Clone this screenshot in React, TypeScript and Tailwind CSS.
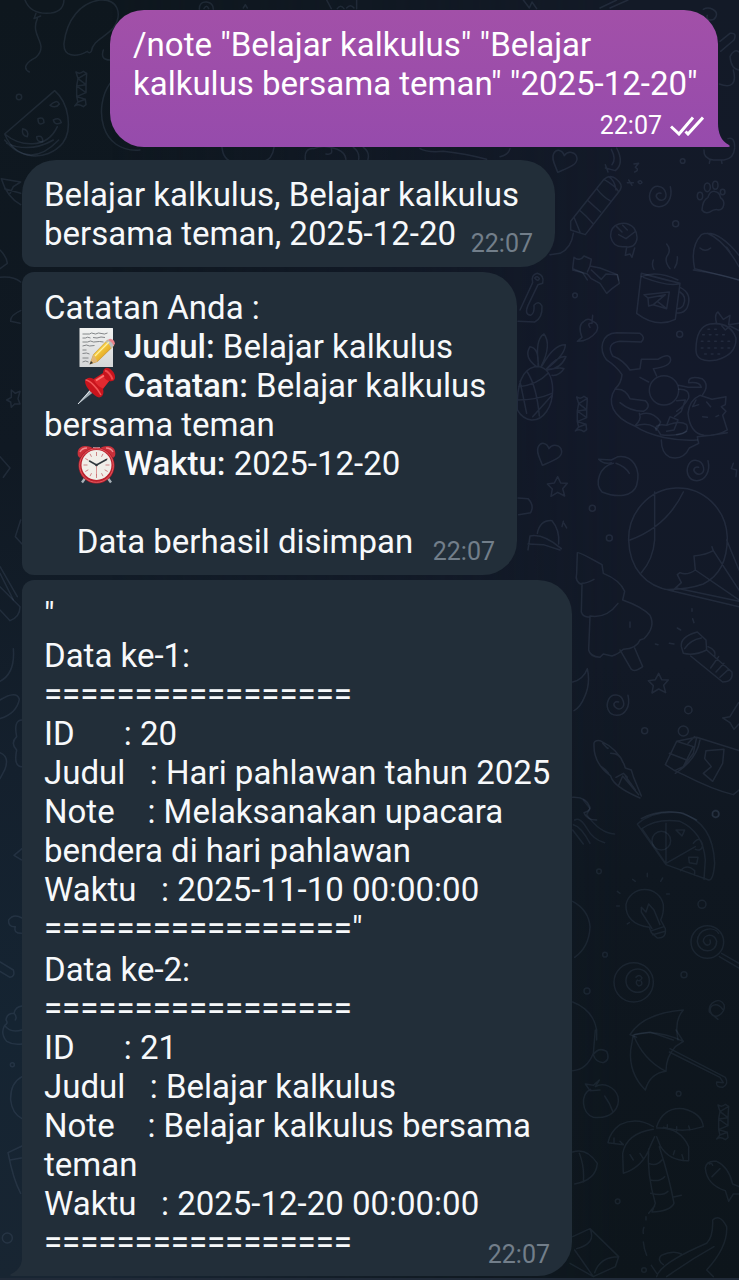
import React from "react";

const RULE = "=================";

function Star() {
  return <path d="M0-30 9-11 29-10 15 6 21 28 0 17-20 29-16 7-31-8-10-11Z" />;
}

function Swirl() {
  return <path d="M30-28C38 4 22 32-4 32S-38 4-28-16 10-32 16-10 2 18-8 8-8-12 2-8" />;
}

function Heart() {
  return <path d="M-22 34C-30 10-42-6-34-22S-8-34-2-16C8-32 34-28 36-8S6 22-22 34Z" />;
}

function Candy() {
  return <path d="M-16-52Q-4-44 6-54L16-48-10-32 14-14-14-10 14 10-14 22 12 30-10 38-20 50Q-8 42 6 52L14 46 12 30M-16-52-10-32-14-10-14 22-10 38M16-48 14-14 14 10" />;
}

function Wallpaper() {
  return (
    <svg
      aria-hidden="true"
      className="absolute inset-0 h-full w-full"
      viewBox="0 0 739 1280"
      preserveAspectRatio="xMidYMin slice"
      fill="none"
      strokeLinecap="round"
      strokeLinejoin="round"
    >
      <defs>
        <linearGradient id="edge" x1="0" y1="0" x2="0" y2="1">
          <stop offset="0" stopColor="#0e171e" />
          <stop offset="0.35" stopColor="#101923" />
          <stop offset="0.6" stopColor="#14202d" />
          <stop offset="0.8" stopColor="#152432" />
          <stop offset="1" stopColor="#182532" />
        </linearGradient>
        <linearGradient id="side" x1="0" y1="0" x2="0" y2="1">
          <stop offset="0" stopColor="#131a27" />
          <stop offset="0.3" stopColor="#13192a" />
          <stop offset="0.52" stopColor="#121926" />
          <stop offset="0.68" stopColor="#0f1720" />
          <stop offset="1" stopColor="#0d151b" />
        </linearGradient>
        <linearGradient id="fade" x1="0" y1="0" x2="1" y2="0">
          <stop offset="0.15" stopColor="#fff" stopOpacity="0" />
          <stop offset="0.85" stopColor="#fff" />
        </linearGradient>
        <mask id="blend">
          <rect width="739" height="1280" fill="url(#fade)" />
        </mask>
      </defs>
      <rect width="739" height="1280" fill="url(#edge)" />
      <rect width="739" height="1280" fill="url(#side)" mask="url(#blend)" />

      <g stroke="#6e85a0" strokeOpacity="0.17" strokeWidth="4.5">
        <g transform="scale(.3333)">
          <path d="M75 0Q90 40 140 40T192 0M108 40 102 56 122 48M112 56C88 110 150 130 108 172C76 188 68 206 88 216" />
          <path d="M192 130C200 60 240 8 300 0C352-4 370 40 340 84C310 116 280 120 274 154Q268 162 262 154C226 174 190 170 192 130Z" />
          <path d="M14 402 164 272C208 310 218 390 188 430C140 486 46 482 14 402ZM14 402C60 440 140 450 172 380" />
          <path d="M150 316q20-20 28-4-10 14-28 4ZM114 356q18-8 18 12-18 12-18-12ZM160 360q20-10 24 8-20 10-24-8ZM68 386q20 4 14 24-18-2-14-24ZM110 410q20-6 18 16-18 0-18-16Z" />
          <g transform="translate(244 268)"><Candy /></g>
          <circle cx="57" cy="291" r="8" />
          <path d="M330 250C280 320 300 460 420 450M310 150q-10 30 20 30M598 28q0-24 22-22 20 2 20 22M612 26q8-14 14 0M730 24 736 14 742 24M980 0l14 26M1012 26q10-14 20 0M1040 24q12-14 22 0M1070 0v26" />
          <path d="M666 442q4 40 36 44M822 442q-4 36-34 44M916 478q-4-34 26-32 30-14 70 2 24 10 26 30M994 446q6 20-16 16M1060 442q20 14 16 36M1090 442q20 14 14 36M1260 446q20 12 70 8 70 8 130 24" />
        </g>

        <g transform="translate(500 0) scale(.3333)">
          <path d="M70 0 88 24 96 6 110 26M300 24 350 0M330 24 384 0M610 28C626 18 656 30 648 50 640 66 616 62 622 46M660 124 690 100Q712 96 702 120L662 154M690 170Q704 144 717 156M690 170Q694 208 717 210M700 210C712 256 690 264 658 252M0 470Q26 464 30 446" />
          <g transform="translate(195 483)"><Heart /></g>
          <path d="M350 444Q374 490 346 512L316 504M334 448Q350 478 336 494M316 494 324 516M402 492 416 490 406 502Q420 510 404 516M382 548H400M386 540 396 556M414 546q8-8 12 2-6 8-12-2M612 450Q610 476 640 480H672Q702 476 704 444M630 480 628 490M664 480 666 490M684 416Q704 410 704 440" />
          <circle cx="548" cy="483" r="7" />
          <path d="M212 664 312 538Q334 518 358 546 370 560 356 576L256 704 212 690ZM312 538Q350 560 356 576M326 530Q344 540 348 570M290 566Q310 592 330 602M262 600Q286 622 302 636M238 630Q262 650 280 672M222 652 240 696M220 700Q214 744 180 760L150 764" />
          <g transform="translate(481 588)"><Swirl /></g>
          <path d="M606 630Q608 600 624 592C632 566 658 570 662 594 678 604 672 630 656 630Q644 626 630 636 614 642 606 630Z" />
          <ellipse cx="600" cy="588" rx="8" ry="11" /><ellipse cx="622" cy="562" rx="9" ry="13" /><ellipse cx="646" cy="556" rx="8" ry="12" /><ellipse cx="668" cy="576" rx="7" ry="8" />
          <path d="M332 710C330 670 376 658 402 684 420 712 410 746 378 740 348 744 336 730 332 710M350 680 366 696M368 676 382 690M356 704 378 716 404 696M380 742 376 766 390 762 396 772 404 744" />
          <circle cx="527" cy="671" r="9" />
          <path d="M460 780Q454 796 462 808M500 732Q516 750 500 770 494 786 510 806M532 770Q534 788 524 804M584 806Q570 740 604 704 650 684 717 766M622 700Q672 720 717 800M600 744Q616 758 632 744M680 742 690 756M584 806Q640 820 717 840" />
          <path d="M218 806 222 772Q240 786 252 768L274 778 270 798 300 804 352 824 356 840M218 806 248 818 262 840M270 798 262 816M424 830Q470 810 534 840" />
        </g>

        <g transform="translate(500 270) scale(.3333)">
          <path d="M60 120 98 38Q92 14 112 10 134 16 128 40L114 44 84 106Q72 134 92 136 104 130 102 106 116 90 126 108 128 144 104 156L54 154M104 24q8-8 14 2-4 10-14-2" />
          <path d="M218 0 262 12 274 26 300 40 320 70 336 56 358 40 352 14 318 12 304 28 274 0M580 0Q660 12 717 30" />
          <path d="M424 10 540 40 526 148Q470 176 410 130L424 10ZM424 10Q470 24 540 40Q510 52 430 22M540 52Q578 70 562 112 552 132 530 128M540 66Q562 80 550 106 544 116 532 116M432 74 508 66 500 116 460 104 446 108 444 84ZM444 84 496 74 460 104M472 94 500 116" />
          <circle cx="225" cy="76" r="7" /><circle cx="539" cy="193" r="9" /><circle cx="277" cy="715" r="9" /><circle cx="328" cy="804" r="9" />
          <path d="M246 202Q232 164 252 154 264 142 278 154 300 162 290 184 268 214 232 214ZM278 136 276 160Q260 158 270 172" />
          <path d="M52 420C50 360 60 300 104 290 142 286 158 320 158 360 158 410 130 452 94 450Q68 448 52 420ZM60 334 80 430M82 306Q110 350 118 438M52 390Q110 390 156 370M56 350Q110 346 144 310M98 440 156 376M110 290Q70 262 90 230 118 234 114 288M116 288Q104 208 132 192 156 224 124 288M126 288Q160 224 196 224 196 254 140 296M140 296Q176 256 198 260 180 300 142 298M142 300Q180 290 192 296 178 318 156 316" />
          <g transform="translate(246 433)"><Candy /></g>
          <g transform="translate(149 552)"><Heart /></g>
          <g transform="translate(173 650)"><Star /></g>
          <g transform="translate(594 600)"><Swirl /></g>
          <path d="M700 580 694 596 710 600 708 620M54 684 84 686Q104 706 92 728L56 734" />
          <path d="M366 314Q350 290 320 270C296 240 302 190 350 188L420 190Q438 202 424 216L360 214Q316 220 338 258 370 270 390 300L420 296 424 268 474 268Q510 246 512 270 510 290 460 296L470 318M366 314Q364 340 346 356C320 396 336 440 404 468 450 500 530 514 592 510M346 358Q376 354 390 386L436 392Q456 410 430 424 390 424 360 398M418 430Q426 450 404 468M420 434Q456 420 482 456L470 480M404 468Q460 450 482 494 530 500 560 484M420 322 446 336" />
          <circle cx="492" cy="361" r="44" />
          <path d="M536 346 564 352 604 352Q600 334 566 338 564 316 606 326 630 344 608 374M530 392 556 390 544 424 524 440M536 358Q570 356 566 384 552 410 530 424M468 480Q464 460 500 466L510 440 534 450 522 480 500 484M500 466Q540 450 560 464 570 490 530 494M564 430Q568 390 600 376L636 388 678 380 676 404 664 410 678 424 668 436 682 480Q650 500 612 496 570 490 564 430M588 390 578 410 596 404M620 396 632 410M608 440 622 442M648 440 656 436M484 510Q484 550 510 562 550 572 568 534L596 520 592 500 632 496 682 488" />
          <path d="M588 240Q588 170 630 162 690 154 708 204 710 254 650 270 588 280 588 240ZM650 160Q642 134 654 126L670 148 690 136 686 164 717 160M664 166 676 180 690 168 717 182" />
          <path strokeDasharray="5 15" d="M608 194H680M604 214H698M604 234H692M614 252H660M624 178H660" />
          <path d="M340 580C298 590 282 640 306 666 350 684 400 680 410 646 424 596 398 554 354 560L334 570 296 568Q310 584 334 578M348 580Q376 590 388 610" />
          <path d="M84 840 90 798Q130 790 184 836M84 822 130 824 180 840M112 790Q120 750 156 752 180 780 176 822M192 760 200 774M190 754 186 770" />
        </g>

        <g transform="translate(540 540) scale(.3333)">
          <path d="M266 0C268 84 316 140 394 152L597 200M266 4A148 154 0 0 1 562 -8C562 60 540 108 490 132Q440 150 374 148M344 0C340 50 320 80 304 98M270 0Q380-40 430-144M344 0V-144M462 48Q500 44 520 32L516 20M462 48 466 90Q440 108 420 98L412 104 424 128 398 152M466 90 597 180M520 32 597 150M560 0 597 90M408 144 597 184" />
          <path d="M112 38Q116 34 186 74L190 100Q240 120 254 154L248 180Q306 200 330 226 348 260 312 296L300 300Q290 326 250 328 236 342 216 348L190 342 180 352Q150 350 146 330L150 230Q130 234 124 216L126 134Q104 126 110 100ZM126 130Q140 130 162 118M150 228Q200 236 234 190M240 330 274 388Q284 398 308 380L284 324M270 246V262" />
          <path d="M424 320Q420 290 472 276L498 300 500 330Q464 348 430 340ZM434 326Q450 300 484 294M452 348 548 426Q580 426 576 396L500 330M504 320Q530 330 524 350M512 384 536 350M528 396 552 370M540 412 566 388M456 206V214M458 236 462 248M412 264 422 270M388 310 402 312M346 312 354 314" />
          <g transform="translate(356 430)"><Star /></g>
          <g transform="translate(234 494)"><Swirl /></g>
          <path d="M98 426Q130 418 142 386 152 430 134 470 120 504 102 512M548 534 570 530 582 510 596 488M548 534 570 548 582 568 597 552" />
          <circle cx="445" cy="510" r="11" /><circle cx="314" cy="572" r="9" /><circle cx="430" cy="573" r="15" /><circle cx="527" cy="822" r="9" />
          <path d="M162 614Q160 600 180 602 240 630 256 684L274 690 280 710 304 768M162 614Q160 670 212 708 220 740 300 774M188 610Q206 630 204 624M212 640Q240 640 248 666M184 680Q200 690 206 700M228 712 250 700 262 712M236 736 248 708 296 764M256 708 286 750" />
          <path d="M376 674 410 604 470 592 597 632M376 674 404 692 430 704Q520 750 580 764L597 750M410 604 460 620 430 680 404 692M388 640 440 660M444 610 464 590M470 592 460 640 430 680M480 600Q470 660 406 700M498 632 552 628 548 670 518 724 490 700 514 680 494 656ZM98 772Q140 770 150 802 150 814 132 818 140 840 170 840M304 836Q360 806 430 820L470 840" />
        </g>

        <g transform="translate(540 800) scale(.3333)" strokeOpacity="0.13">
          <path d="M130 0 150 26 140 44Q180 100 224 102M104 60Q120 50 140 84 160 120 194 128M100 74Q124 80 150 130M98 90 130 132" />
          <path d="M292 72Q340 30 420 38 520 66 524 190 520 242 506 240L378 194ZM306 86Q350 54 420 64 490 96 496 180L492 238M306 86 378 192M378 70V190L466 140M408 90 434 90 426 108ZM446 172 474 172 470 192 448 188ZM422 212Q440 190 464 212V226M460 130Q480 104 488 136 484 156 466 148" />
          <circle cx="364" cy="122" r="28" /><circle cx="527" cy="42" r="11" /><circle cx="486" cy="313" r="12" /><circle cx="432" cy="524" r="9" /><circle cx="141" cy="573" r="9" /><circle cx="177" cy="214" r="7" /><circle cx="195" cy="464" r="7" />
          <path d="M328 382C280 376 256 350 258 314A57 56 0 0 1 370 314Q372 340 362 360L376 386Q380 416 352 414L334 398ZM304 336 304 322 318 336 326 312 342 330M304 336 336 386M342 330 360 374M336 392 372 380M338 404 376 394M240 280 232 274M238 318H230M278 238 286 244M322 220V230M368 234 362 244M388 282H380M262 372 268 368" />
          <circle cx="502" cy="426" r="49" /><path d="M536 400C520 376 474 386 472 424 476 462 530 462 530 424 522 396 490 404 490 424 500 444 516 434 510 420M545 460 597 490M538 470 597 504" />
          <circle cx="281" cy="547" r="59" /><circle cx="293" cy="542" r="35" /><path d="M288 532Q298 520 306 534 300 546 292 540 284 550 296 558 310 556 304 544" />
          <path d="M98 304Q146 330 150 380 148 440 104 472M98 606Q160 630 170 690V720M548 628C530 604 506 616 512 636 520 664 560 640 552 614 540 590 504 606 508 636L534 658" />
          <path d="M270 704Q310 640 430 630 402 660 414 720M284 704 330 696 400 720M270 704 290 712" />
        </g>

        <g transform="translate(540 1030) scale(.3333)" strokeOpacity="0.13">
          <path d="M280 14Q350-4 430 34L406 50Q378 80 378 124 330 130 316 180 266 130 272 60ZM280 14Q310 90 378 124M408 0 430 34M388 66 540 142 550 158 530 156Q526 172 548 172 568 162 556 142L390 56M166 0 160 70Q140 120 98 122M160 74Q176 50 200 64 212 90 190 98 166 96 160 74" />
          <path d="M152 178C120 190 124 250 160 262 220 268 240 230 234 200 224 170 190 156 166 170L178 150 160 166 136 162 150 182 180 180M194 198Q210 220 218 244" />
          <g transform="translate(550 277)"><Candy /></g>
          <path d="M350 290Q370 230 430 236 486 250 490 290 430 310 370 292M340 290Q290 260 240 284 210 306 204 338L250 344 240 334M340 298Q260 310 248 370L250 430Q310 410 330 350L344 320M350 294Q420 290 446 350V392Q390 394 362 350L350 320M326 356Q320 430 346 520L336 546Q390 544 402 520 390 450 358 350M326 400Q350 410 366 390M332 450Q360 456 374 440M332 490Q370 500 384 484M398 502 424 496M344 528 326 550M382 296V284M410 302V290M450 300 446 288M222 338V324M280 390 270 374M310 386 300 370M400 374 404 362M430 388 426 374" />
          <path d="M496 414Q500 390 530 394 566 410 578 462L597 470M496 414Q500 464 556 482L566 514 580 492H597M516 440 540 416M508 402q8-4 10 4M98 366Q140 352 172 400 168 450 104 462M118 370Q134 410 130 456M318 560V570M312 592Q308 600 310 610M310 636Q312 656 320 676" />
          <circle cx="416" cy="191" r="7" /><circle cx="233" cy="514" r="7" /><circle cx="312" cy="720" r="7" />
          <path d="M98 620 150 596 236 680 226 710 160 740 104 660M150 596Q170 640 110 656M236 680Q180 680 164 728M160 740 90 700M350 740Q360 700 500 640 520 620 518 570 540 550 560 590 564 650 500 720L520 740M370 704Q350 690 364 676 400 660 424 672M380 740Q450 690 522 650M334 706 350 730" />
        </g>

        <g transform="translate(0 140) scale(.3333)">
          <path d="M14 0Q90 90 176 0M20 10Q90 40 160 0M4 116 62 126M4 116Q20 170 62 194M62 126 40 140 30 160M14 146 62 160M0 330Q20 350 22 370L0 386M0 412Q40 408 62 426M62 512Q30 526 32 544L60 550M34 750 46 760 60 754 54 776 60 792 44 792 34 802 32 786 20 780 34 772ZM0 950 30 984 10 1012M62 1140 46 1190 66 1212M0 1280 52 1370M0 1300 40 1380" />
        </g>
        <g transform="translate(0 570) scale(.3333)">
          <path d="M0 50 60 110Q60 140 30 152L0 120M40 236Q46 310 0 334M0 390Q50 360 58 388 50 430 0 446M66 450Q40 450 50 500 30 520 50 540 40 590 66 590M0 548Q30 560 14 600L0 626M66 836 42 856 64 870M66 1044Q40 1030 26 1050 24 1072 46 1070 40 1090 64 1090" />
        </g>
        <g transform="translate(0 900) scale(.3333)">
          <path d="M0 186 40 210Q46 230 30 232L0 214M66 318Q46 320 42 340 20 340 18 360 26 370 14 376 0 400 20 424 40 436 66 432M14 376Q30 400 66 390M42 340Q52 350 46 360M66 530Q30 550 32 600 36 640 66 656M66 738 24 758Q40 840 62 880M30 780 64 774" />
          <circle cx="22" cy="1014" r="15" /><circle cx="37" cy="494" r="6" />
        </g>
      </g>
    </svg>
  );
}

function MemoIcon() {
  return (
    <svg viewBox="0 0 39 39" className="-my-2 inline-block size-[39px] align-[-1px]" role="img" aria-label="Memo">
      <defs>
        <linearGradient id="paper" x1="0" y1="0" x2="0" y2="1">
          <stop offset="0" stopColor="#f1f2f1" />
          <stop offset="1" stopColor="#d5d7d8" />
        </linearGradient>
        <linearGradient id="pencil" x1="0" y1="0" x2="1" y2="1">
          <stop offset="0.25" stopColor="#ffe04d" />
          <stop offset="0.75" stopColor="#dd9a1d" />
        </linearGradient>
      </defs>
      <rect x="2.5" y="0" width="33.5" height="39" rx=".5" fill="url(#paper)" />
      <path d="M5.500 6h7l2-1 4 1 3-1 6 1 3-1M5.500 10h3l2-.8 3 .8M16 9.500l4 .5 4-1 4 .5M5.500 14h5l3-1 3 1 6-.5 4 .5M5.500 18l4-1 3 1 5-.5M5.500 22h4M5.500 25.500l4-.5 3 1M5.500 30h6M5.500 34l3-1 3 1" stroke="#777b7e" strokeWidth=".9" fill="none" />
      <path d="m13 36 3.500-9.500 14-14.500q4 1 6.500 5.500L20.500 33.500Z" fill="url(#pencil)" stroke="#b9801e" strokeWidth=".5" />
      <path d="m16.500 26.500 4 7L13 36Z" fill="#dfb67a" /><path d="m14 33 2 2-3.500 1.500Z" fill="#333" />
      <path d="m28.500 14 3-2.500q4 1.500 5.500 6l-3 3q-1-5-5.500-6.500Z" fill="#b9bdc1" />
      <path d="m31 12 2-1.200q4.500.3 5 5l-1.500 2q-1.500-4.300-5.500-5.800Z" fill="#e8838b" />
      <path d="m18 28 14-14" stroke="#fff0a0" strokeWidth="1.200" />
    </svg>
  );
}

function PinIcon() {
  return (
    <svg viewBox="0 0 39 39" className="-my-2 inline-block size-[39px] align-[-1px]" role="img" aria-label="Pushpin">
      <path d="M.8 37.500 15 20l4 3Z" fill="#9ca9b2" /><path d="m1 37 15-16.500" stroke="#e0e7ec" strokeWidth="1" />
      <path d="M8 14.500c1-4 5-4.500 8.500-2.500L26 6c0-4 2.500-6.500 6-4.800 4 2 7 7 5.800 10.500-1 2.500-3.500 2.800-5.500 2.300L26 22c1.200 4 0 8-4 8.500C17 29 8 20.500 8 14.500Z" fill="#c9141d" />
      <path d="M8.500 13c4 0 12 8 15.500 15" stroke="#f25657" strokeWidth="1.500" fill="none" />
      <path d="m17 13 9-6c0 3 3 6 6 7l-6 7.500C22 20 18 16 17 13Z" fill="#e12a30" />
      <path d="m19 13.500 8-5" stroke="#ff7470" strokeWidth="2" /><path d="M28 3.500c3 1 6.500 5 7.500 9" stroke="#f04a4d" strokeWidth="2" fill="none" />
    </svg>
  );
}

function ClockIcon() {
  return (
    <svg viewBox="0 0 39 39" className="-my-2 inline-block size-[39px] align-[-1px]" role="img" aria-label="Alarm clock">
      <path d="m9 32-4 5.500M30 32l4 5.500" stroke="#a7b0b7" strokeWidth="2.400" />
      <path d="M16 2h7v4h-7Z" fill="#aab3ba" />
      <path d="M1 11C-.5 5 3 1 8 1c4 0 7 1 8.500 3Q8 6 3 13ZM38 11c1.500-6-2-10-7-10-4 0-7 1-8.500 3Q31 6 36 13Z" fill="#c9303a" />
      <path d="M3 7q2-4 7-4M36 7q-2-4-7-4" stroke="#f0898d" strokeWidth="1.500" fill="none" />
      <circle cx="19.500" cy="20.500" r="18" fill="#b91f2b" /><circle cx="19.500" cy="20.500" r="16.800" fill="none" stroke="#e45b62" strokeWidth="1" />
      <circle cx="19.500" cy="20" r="15" fill="#f1eee9" />
      <path d="M19.500 7v4M19.500 29v4M6.500 20h4M28.500 20h4M13 8.800l1.500 3M26 8.800l-1.500 3M8.300 13.500l3 1.700M30.700 13.500l-3 1.700M8.300 26.500l3-1.700M30.700 26.500l-3-1.700M13 31.200l1.500-3M26 31.200l-1.500-3" stroke="#c9767b" strokeWidth=".9" />
      <path d="M19.500 20v11" stroke="#d06d70" strokeWidth=".7" />
      <path d="m19.500 20-7-4M19.500 20l10-5.500" stroke="#30383e" strokeWidth="1.500" strokeLinecap="round" />
      <circle cx="19.500" cy="20" r="1.300" fill="#30383e" />
    </svg>
  );
}

function SentTicks() {
  return (
    <svg viewBox="0 0 34 20" className="h-5 w-[34px]" fill="none" stroke="#fff" strokeWidth="3" role="img" aria-label="Read">
      <path d="m1 10.500 8 7.500L23 1.500M15.500 15.500l2.500 2.500L33 1.500" />
    </svg>
  );
}

function Time() {
  return (
    <time dateTime="22:07" className="-mt-[23px] ml-auto block w-fit text-[25px] leading-7 text-[#727e8a]">
      22:07
    </time>
  );
}

type RecordProps = { n: number; id: number; title: string; note: string; when: string; tail?: string };

function DataRecord({ n, id, title, note, when, tail = "" }: RecordProps) {
  return (
    <div className="-mr-3">
      <p>Data ke-{n}:</p>
      <p>{RULE}</p>
      <p>{`ID      : ${id}`}</p>
      <p>{`Judul   : ${title}`}</p>
      <p>{`Note    : ${note}`}</p>
      <p>{`Waktu   : ${when}`}</p>
      <p>{RULE + tail}</p>
    </div>
  );
}

export default function App() {
  return (
    <div className="relative min-h-screen overflow-hidden bg-[#101923] font-['Roboto','Noto_Sans',sans-serif] text-[33px] leading-[39px] text-[#f7f9fb]">
      <Wallpaper />
      <main className="relative flex flex-col items-start pt-[10px] pr-[21px] pl-[22px]">
        <article className="relative w-full max-w-[608px] self-end rounded-t-[34px] rounded-bl-[34px] bg-linear-to-b from-[#a250a8] to-[#964bac] pt-[15px] pr-[14px] pb-[6px] pl-[23px] text-white">
          <p>/note "Belajar kalkulus" "Belajar kalkulus bersama teman" "2025-12-20"</p>
          <div className="mt-[7px] flex items-center justify-end gap-2 text-[25px] leading-[31px]">
            <time dateTime="22:07">22:07</time>
            <SentTicks />
          </div>
          <svg aria-hidden="true" viewBox="0 0 13 24" className="absolute -right-3 bottom-0 h-6 w-[13px]" fill="#964bac">
            <path d="M0 0h1C1 10 4 18 12 22q2 2-1 2H0Z" />
          </svg>
        </article>

        <article className="mt-[13px] w-full max-w-[533px] rounded-r-[34px] rounded-tl-[34px] rounded-bl-[12px] bg-[#222e39] pt-[15px] pr-[22px] pb-[9px] pl-[22px]">
          <p>Belajar kalkulus, Belajar kalkulus bersama teman, 2025-12-20</p>
          <Time />
        </article>

        <article className="mt-[5px] w-full max-w-[495px] rounded-l-[12px] rounded-r-[34px] bg-[#222e39] pt-4 pr-[22px] pb-[9px] pl-[22px] whitespace-pre-wrap">
          <p>Catatan Anda :</p>
          <p>{"    "}<MemoIcon />{" "}<b className="font-medium">Judul:</b> Belajar kalkulus</p>
          <p>{"    "}<PinIcon />{" "}<b className="font-medium">Catatan:</b> Belajar kalkulus bersama teman</p>
          <p>{"    "}<ClockIcon />{" "}<b className="font-medium">Waktu:</b> 2025-12-20</p>
          <p className="mt-[39px]">{"    Data berhasil disimpan"}</p>
          <Time />
        </article>

        <article className="relative mt-[5px] flex w-full max-w-[550px] flex-col gap-[2px] rounded-tl-[12px] rounded-r-[34px] bg-[#222e39] pt-[15px] pr-[22px] pb-[7px] pl-[22px] whitespace-pre-wrap">
          <p>"</p>
          <DataRecord n={1} id={20} title="Hari pahlawan tahun 2025" note="Melaksanakan upacara bendera di hari pahlawan" when="2025-11-10 00:00:00" tail={'"'} />
          <DataRecord n={2} id={21} title="Belajar kalkulus" note="Belajar kalkulus bersama teman" when="2025-12-20 00:00:00" />
          <Time />
          <svg aria-hidden="true" viewBox="0 0 13 18" className="absolute bottom-0 -left-3 h-[18px] w-[13px]" fill="#222e39">
            <path d="M13 0h-1c0 7-4 13-11 16q-2 2 1 2h11Z" />
          </svg>
        </article>
      </main>
      <div className="relative mt-[2px] h-[2px] bg-[#202a38]" />
    </div>
  );
}
